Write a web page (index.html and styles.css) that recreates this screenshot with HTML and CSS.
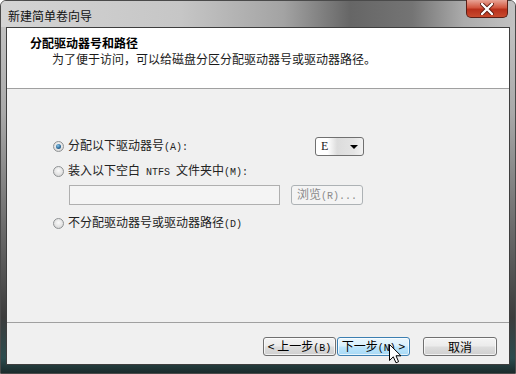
FILE: index.html
```html
<!DOCTYPE html>
<html lang="zh-CN">
<head>
    <meta charset="UTF-8">
    <title>新建简单卷向导</title>
    <link rel="stylesheet" href="styles.css">
</head>
<body>
    <div class="window">
        <div class="titlebar">
            <span class="title">新建简单卷向导</span>
            <button class="close-btn">
                <svg width="14" height="12" viewBox="0 0 14 12">
                    <path d="M2 1 L12 11 M12 1 L2 11" stroke="#5a1a10" stroke-width="4" stroke-linecap="round"/>
                    <path d="M2 1 L12 11 M12 1 L2 11" stroke="#fff" stroke-width="2.4" stroke-linecap="round"/>
                </svg>
            </button>
        </div>

        <div class="client">
            <div class="wizard-head">
                <h1>分配驱动器号和路径</h1>
                <p>为了便于访问，可以给磁盘分区分配驱动器号或驱动器路径。</p>
            </div>

            <div class="wizard-body">
                <div class="row row-letter">
                    <label class="opt"><span class="radio checked"></span><span>分配以下驱动器号<span class="en">(A):</span></span></label>
                    <div class="combo">
                        <span class="combo-value">E</span>
                        <span class="combo-arrow"></span>
                    </div>
                </div>
                <div class="row row-mount">
                    <label class="opt"><span class="radio"></span><span>装入以下空白<span class="en"> NTFS </span>文件夹中<span class="en">(M):</span></span></label>
                </div>
                <div class="row row-path">
                    <div class="textbox"></div>
                    <button class="btn btn-browse">浏览<span class="en">(R)...</span></button>
                </div>
                <div class="row row-none">
                    <label class="opt"><span class="radio"></span><span>不分配驱动器号或驱动器路径<span class="en">(D)</span></span></label>
                </div>
            </div>

            <div class="wizard-foot">
                <button class="btn btn-back">&lt; 上一步<span class="en">(B)</span></button>
                <button class="btn btn-next">下一步<span class="en">(N)</span> &gt;</button>
                <button class="btn btn-cancel">取消</button>
            </div>
        </div>

        <!-- mouse pointer over the next button -->
        <svg class="cursor" width="13" height="20" viewBox="0 0 13 20">
            <path d="M0.5 0.5 L0.5 16.5 L4.3 12.8 L7 18.8 L9.6 17.7 L7 11.8 L12 11.8 Z" fill="#fff" stroke="#000" stroke-width="1"/>
        </svg>
    </div>
</body>
</html>
```

FILE: styles.css
```css
* {
    box-sizing: border-box;
    margin: 0;
    padding: 0;
}

body {
    width: 516px;
    height: 374px;
    overflow: hidden;
    background: #fff;
    font-family: "Noto Sans CJK SC", sans-serif;
    font-size: 12px;
    color: #000;
}

.en {
    font-family: "Liberation Mono", monospace;
    font-size: 10px;
    white-space: pre;
}

.window {
    position: relative;
    width: 516px;
    height: 374px;
    display: flex;
    flex-direction: column;
    border-radius: 6px 6px 0 0;
    border: 1px solid #4a4a4a;
    background: linear-gradient(180deg, #c9c9c9 0, #a9a9a9 30%, #6d6d6d 60%, #3c3c3c 85%, #2c4c4e 96%, #1b2a2b 100%);
}

.titlebar {
    height: 26px;
    display: flex;
    justify-content: space-between;
    padding: 0 7px 0 7px;
    border-radius: 5px 5px 0 0;
    background: linear-gradient(90deg, #d4d4d4 0, #c6c6c6 35%, #a3a3a3 55%, #666 68%, #747474 80%, #ababab 90%, #c2c2c2 100%);
}

.title {
    align-self: center;
    margin-top: 3px;
    line-height: 16px;
    color: #111;
}

.close-btn {
    width: 42px;
    height: 18px;
    margin-top: -1px;
    display: flex;
    align-items: center;
    justify-content: center;
    border: 1px solid #5b1f16;
    border-top: none;
    border-radius: 0 0 5px 5px;
    background: linear-gradient(180deg, #e8a496 0, #d2563f 45%, #b8301b 55%, #c84a2e 100%);
}

.client {
    margin: 0 5px;
    height: 338px;
    display: flex;
    flex-direction: column;
    border: 1px solid #3e3e3e;
    background: #f0f0f0;
}

.wizard-head {
    height: 61px;
    padding: 7px 0 0 23px;
    background: #fff;
    border-bottom: 1px solid #a0a0a0;
    line-height: 16px;
}

.wizard-head h1 {
    font-size: 12px;
    font-weight: bold;
}

.wizard-head p {
    padding-left: 22px;
    color: #1a1a1a;
}

.wizard-body {
    height: 233px;
    padding: 48px 0 0 46px;
    color: #222;
}

.row {
    display: flex;
    align-items: center;
}

.row-letter {
    height: 19px;
}

.row-mount {
    height: 16px;
    margin-top: 7px;
}

.row-path {
    margin-top: 6px;
    padding-left: 16px;
}

.row-none {
    height: 16px;
    margin-top: 10px;
}

.opt {
    display: flex;
    align-items: center;
    width: 262px;
    line-height: 16px;
    white-space: nowrap;
}

.radio {
    width: 11px;
    height: 11px;
    margin-right: 4px;
    border-radius: 50%;
    border: 1px solid #8f9294;
    background: radial-gradient(circle at 50% 40%, #fafafa 0, #e4e4e4 55%, #c9c9c9 100%);
    display: flex;
    align-items: center;
    justify-content: center;
}

.radio.checked::after {
    content: "";
    width: 5px;
    height: 5px;
    border-radius: 50%;
    background: radial-gradient(circle at 40% 35%, #8ac6e8 0, #2d6b9c 55%, #1a3d5e 100%);
}

.combo {
    width: 49px;
    height: 19px;
    display: flex;
    align-items: center;
    justify-content: space-between;
    padding: 0 5px 0 5px;
    border: 1px solid #707070;
    border-radius: 3px;
    background: linear-gradient(90deg, #fff 0, #fff 25%, #dcdcdc 45%, #e4e4e4 80%, #f2f2f2 100%);
}

.combo-value {
    font-family: "Liberation Serif", serif;
    font-size: 12px;
}

.combo-arrow {
    width: 0;
    height: 0;
    border-left: 4px solid transparent;
    border-right: 4px solid transparent;
    border-top: 4px solid #000;
}

.textbox {
    width: 211px;
    height: 20px;
    border: 1px solid #afafaf;
    background: #f4f4f4;
}

.btn {
    height: 19px;
    font-family: "Noto Sans CJK SC", sans-serif;
    font-size: 12px;
    line-height: 16px;
    color: #000;
    border: 1px solid #707070;
    border-radius: 3px;
    background: linear-gradient(180deg, #f4f4f4 0, #ebebeb 48%, #dddddd 52%, #cfcfcf 100%);
    box-shadow: inset 0 0 0 1px rgba(255, 255, 255, 0.7);
}

.btn-browse {
    width: 72px;
    height: 20px;
    margin-left: 11px;
    color: #8a8a8a;
    border-color: #adb2b5;
    background: #f4f4f4;
    box-shadow: none;
}

.wizard-foot {
    flex: 1;
    display: flex;
    justify-content: flex-end;
    align-items: flex-start;
    padding: 14px 12px 0 0;
    border-top: 1px solid #a0a0a0;
}

.btn-back {
    width: 73px;
}

.btn-next {
    width: 73px;
    margin-left: 1px;
    border-color: #3c7fb1;
    background: linear-gradient(180deg, #eaf6fd 0, #d9f0fc 48%, #bee6fd 52%, #a7d9f5 100%);
}

.btn-cancel {
    width: 74px;
    margin-left: 13px;
}

.cursor {
    position: absolute;
    left: 388px;
    top: 343px;
}
```
